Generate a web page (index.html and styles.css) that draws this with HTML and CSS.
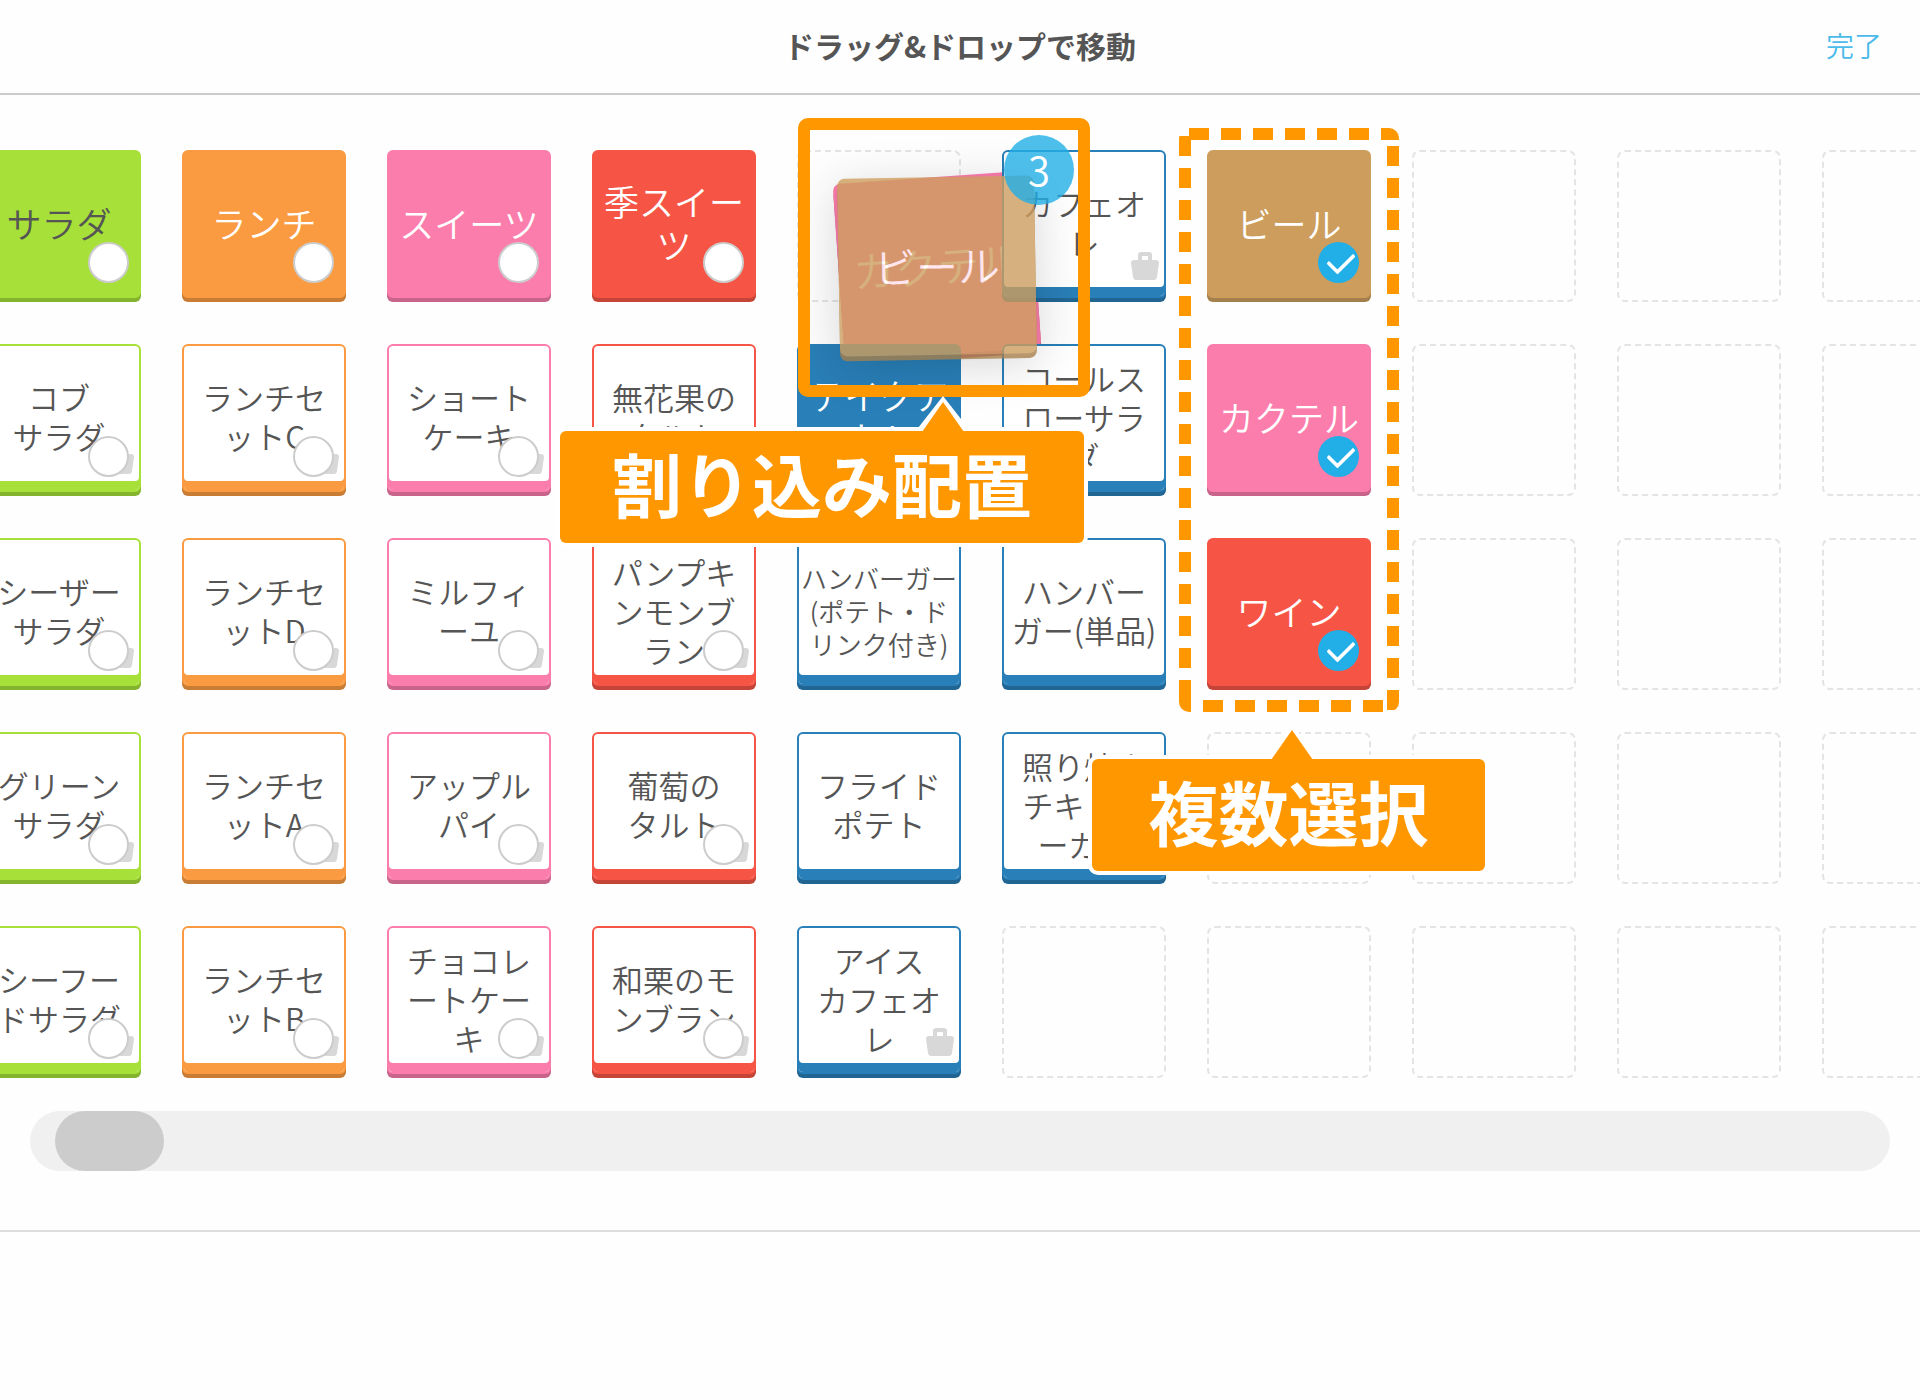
FILE: index.html
```html
<!DOCTYPE html>
<html lang="ja">
<head>
<meta charset="utf-8">
<title>ドラッグ&amp;ドロップで移動</title>
<link rel="stylesheet" href="styles.css">
</head>
<body>
<header class="topbar">
  <h1 class="title">ドラッグ&amp;ドロップで移動</h1>
  <button class="done" type="button">完了</button>
</header>
<main class="board">
  <svg class="defs" width="0" height="0" aria-hidden="true">
    <symbol id="bag" viewBox="0 0 28 28">
      <path fill-rule="evenodd" d="M7 8V3Q7 0 10 0H18Q21 0 21 3V8H25Q28 8 28 11L26 25Q25.500 28 23 28H5Q2.500 28 2 25L0 11Q0 8 3 8ZM12 4Q11 4 11 5V8H17V5Q17 4 16 4Z"/>
    </symbol>
  </svg>
  <div class="grid">
    <label class="tile green solid dark-text"><span>サラダ</span><input type="checkbox"></label>
    <label class="tile green"><span>コブ<br>サラダ</span><svg class="bag"><use href="#bag"/></svg><input type="checkbox"></label>
    <label class="tile green"><span>シーザー<br>サラダ</span><svg class="bag"><use href="#bag"/></svg><input type="checkbox"></label>
    <label class="tile green"><span>グリーン<br>サラダ</span><svg class="bag"><use href="#bag"/></svg><input type="checkbox"></label>
    <label class="tile green"><span>シーフー<br>ドサラダ</span><svg class="bag"><use href="#bag"/></svg><input type="checkbox"></label>

    <label class="tile orange solid"><span>ランチ</span><input type="checkbox"></label>
    <label class="tile orange"><span>ランチセ<br>ットC</span><svg class="bag"><use href="#bag"/></svg><input type="checkbox"></label>
    <label class="tile orange"><span>ランチセ<br>ットD</span><svg class="bag"><use href="#bag"/></svg><input type="checkbox"></label>
    <label class="tile orange"><span>ランチセ<br>ットA</span><svg class="bag"><use href="#bag"/></svg><input type="checkbox"></label>
    <label class="tile orange"><span>ランチセ<br>ットB</span><svg class="bag"><use href="#bag"/></svg><input type="checkbox"></label>

    <label class="tile pink solid"><span>スイーツ</span><input type="checkbox"></label>
    <label class="tile pink"><span>ショート<br>ケーキ</span><svg class="bag"><use href="#bag"/></svg><input type="checkbox"></label>
    <label class="tile pink"><span>ミルフィ<br>ーユ</span><svg class="bag"><use href="#bag"/></svg><input type="checkbox"></label>
    <label class="tile pink"><span>アップル<br>パイ</span><svg class="bag"><use href="#bag"/></svg><input type="checkbox"></label>
    <label class="tile pink"><span>チョコレ<br>ートケー<br>キ</span><svg class="bag"><use href="#bag"/></svg><input type="checkbox"></label>

    <label class="tile red solid"><span>季スイー<br>ツ</span><input type="checkbox"></label>
    <label class="tile red"><span>無花果の<br>タルト</span><svg class="bag"><use href="#bag"/></svg><input type="checkbox"></label>
    <label class="tile red"><span>パンプキ<br>ンモンブ<br>ラン</span><svg class="bag"><use href="#bag"/></svg><input type="checkbox"></label>
    <label class="tile red"><span>葡萄の<br>タルト</span><svg class="bag"><use href="#bag"/></svg><input type="checkbox"></label>
    <label class="tile red"><span>和栗のモ<br>ンブラン</span><svg class="bag"><use href="#bag"/></svg><input type="checkbox"></label>

    <div class="slot"></div>
    <div class="tile blue solid"><span>テイクア<br>ウト</span></div>
    <div class="tile blue small"><span>ハンバーガー<br>(ポテト・ド<br>リンク付き)</span></div>
    <div class="tile blue"><span>フライド<br>ポテト</span></div>
    <div class="tile blue"><span>アイス<br>カフェオ<br>レ</span><svg class="bag"><use href="#bag"/></svg></div>

    <div class="tile blue"><span>カフェオ<br>レ</span><svg class="bag"><use href="#bag"/></svg></div>
    <div class="tile blue"><span>コールス<br>ローサラ<br>ダ</span></div>
    <div class="tile blue"><span>ハンバー<br>ガー(単品)</span></div>
    <div class="tile blue"><span>照り焼き<br>チキンバ<br>ーガー</span></div>
    <div class="slot"></div>

    <label class="tile tan solid"><span>ビール</span><input type="checkbox" checked></label>
    <label class="tile pink solid"><span>カクテル</span><input type="checkbox" checked></label>
    <label class="tile red solid"><span>ワイン</span><input type="checkbox" checked></label>
    <div class="slot"></div>
    <div class="slot"></div>

    <div class="slot"></div><div class="slot"></div><div class="slot"></div><div class="slot"></div><div class="slot"></div>
    <div class="slot"></div><div class="slot"></div><div class="slot"></div><div class="slot"></div><div class="slot"></div>
    <div class="slot"></div><div class="slot"></div><div class="slot"></div><div class="slot"></div><div class="slot"></div>
  </div>

  <div class="drag drag-under tile pink solid"><span>カクテル</span></div>
  <div class="drag drag-top tile tan solid"><span>ビール</span></div>
  <span class="count">3</span>
  <div class="frame"></div>

  <svg class="marquee" width="220" height="584" viewBox="0 0 220 584" fill="none" stroke="#ff9800" stroke-width="12" aria-hidden="true">
    <path stroke-dasharray="20 12" d="M10 6H220M214 18V584M6 8V552M24 578H210"/>
    <path d="M6 552V584"/>
  </svg>

  <div class="callout insert">割り込み配置
    <svg class="arrow" width="50" height="36" viewBox="0 0 50 36" aria-hidden="true"><path fill="#fff" d="M25 0L50 32H0Z"/><path fill="#ff9800" d="M25 6L46 36H4Z"/></svg>
  </div>
  <div class="callout multi">複数選択
    <svg class="arrow" width="50" height="36" viewBox="0 0 50 36" aria-hidden="true"><path fill="#fff" d="M25 0L50 32H0Z"/><path fill="#ff9800" d="M25 6L46 36H4Z"/></svg>
  </div>
</main>
<footer class="scroller">
  <input class="scroll" type="range" min="0" max="1000" value="14" aria-label="横スクロール">
</footer>
</body>
</html>
```
FILE: styles.css
```css
* { box-sizing: border-box; }

body {
  margin: 0;
  background: #fefefe;
  color: #555;
  font-family: "Noto Sans CJK JP", sans-serif;
  font-weight: 350;
  overflow-x: hidden;
}

.topbar {
  display: grid;
  grid-template-columns: 1fr auto 1fr;
  align-items: center;
  height: 95px;
  padding: 0 38px 4px;
  border-bottom: 2px solid #ccc;
}
.title {
  grid-column: 2;
  margin: 0;
  font-size: 30px;
  line-height: 44px;
  font-weight: 700;
}
.done {
  justify-self: end;
  padding: 0;
  border: 0;
  background: none;
  color: #4cbbea;
  font: inherit;
  font-size: 28px;
  line-height: 44px;
}

.board {
  position: relative;
  padding-top: 55px;
  overflow: hidden;
  isolation: isolate;
}
.defs { position: absolute; }
.grid {
  display: grid;
  grid-auto-flow: column;
  grid-template-rows: repeat(5, 152px);
  grid-auto-columns: 164px;
  gap: 42px 41px;
  margin-left: -23px;
}
.slot {
  border: 2px dashed #e4e4e4;
  border-radius: 8px;
}

.tile {
  --c: #297fb8;
  --d: #216693;
  position: relative;
  z-index: 1;
  display: flex;
  align-items: center;
  justify-content: center;
  height: 148px;
  padding-bottom: 4px;
  border: 2px solid var(--c);
  border-radius: 6px;
  background: #fff;
  box-shadow: inset 0 -9px var(--c), 0 4px var(--d);
  font-size: 31px;
  line-height: 39px;
  text-align: center;
  white-space: nowrap;
}
.green { --c: #a6e038; --d: #84b32d; }
.orange { --c: #fa9b41; --d: #c87c34; }
.pink { --c: #fb7dac; --d: #c8648a; }
.red { --c: #f65545; --d: #c44437; }
.tan { --c: #cd9d5e; --d: #a47e4b; }
.solid {
  background: var(--c);
  color: #fff;
  font-size: 35px;
  line-height: 43px;
}
.dark-text { color: #555; }
.small { font-size: 26px; line-height: 33px; }

.bag {
  position: absolute;
  right: 5px;
  bottom: 16px;
  width: 28px;
  height: 28px;
  fill: #d8d8d8;
}
.tile input {
  position: absolute;
  right: 10px;
  bottom: 13px;
  width: 41px;
  height: 41px;
  margin: 0;
  appearance: none;
  border: 2px solid #ccc;
  border-radius: 50%;
  background: #fff;
}
.tile input:checked { border: 0; background: #22aee6; }
.tile input:checked::after {
  content: "";
  position: absolute;
  left: 10px;
  top: 10px;
  width: 22px;
  height: 12px;
  border: solid #fff;
  border-width: 0 0 4px 4px;
  border-radius: 2px;
  transform: rotate(-45deg);
}

.drag {
  position: absolute;
  left: 855px;
  top: 97px;
  width: 164px;
}
.drag-under { z-index: 0; transform: rotate(-4deg) scale(1.2); }
.drag-top {
  z-index: 2;
  opacity: .8;
  transform: rotate(-1deg) scale(1.2);
  box-shadow: 0 4px var(--d), 0 8px 40px rgba(0, 0, 0, .2);
}
.count {
  position: absolute;
  z-index: 3;
  left: 1004px;
  top: 40px;
  width: 70px;
  height: 70px;
  border-radius: 50%;
  background: rgba(34, 174, 230, .8);
  color: #fff;
  font-size: 40px;
  line-height: 68px;
  text-align: center;
}
.frame {
  position: absolute;
  z-index: 4;
  left: 798px;
  top: 23px;
  width: 292px;
  height: 279px;
  border: 12px solid #ff9800;
  border-radius: 10px;
}
.marquee {
  position: absolute;
  z-index: 4;
  left: 1179px;
  top: 33px;
  border-radius: 10px;
}
.callout {
  position: absolute;
  z-index: 5;
  height: 112px;
  border-radius: 6px;
  background: #ff9800;
  box-shadow: 0 0 0 4px #fff;
  color: #fff;
  font-size: 70px;
  line-height: 104px;
  font-weight: 700;
  text-align: center;
}
.insert { left: 560px; top: 336px; width: 524px; }
.multi { left: 1092px; top: 664px; width: 393px; }
.arrow { position: absolute; top: -35px; }
.insert .arrow { left: 358px; }
.multi .arrow { left: 175px; }

.scroller {
  padding: 33px 30px 59px;
  border-bottom: 2px solid #ddd;
}
.scroll {
  display: block;
  width: 100%;
  height: 60px;
  margin: 0;
  appearance: none;
  border-radius: 30px;
  background: #f0f0f0;
}
.scroll::-webkit-slider-thumb {
  appearance: none;
  width: 109px;
  height: 60px;
  border-radius: 30px;
  background: #ccc;
}
```
